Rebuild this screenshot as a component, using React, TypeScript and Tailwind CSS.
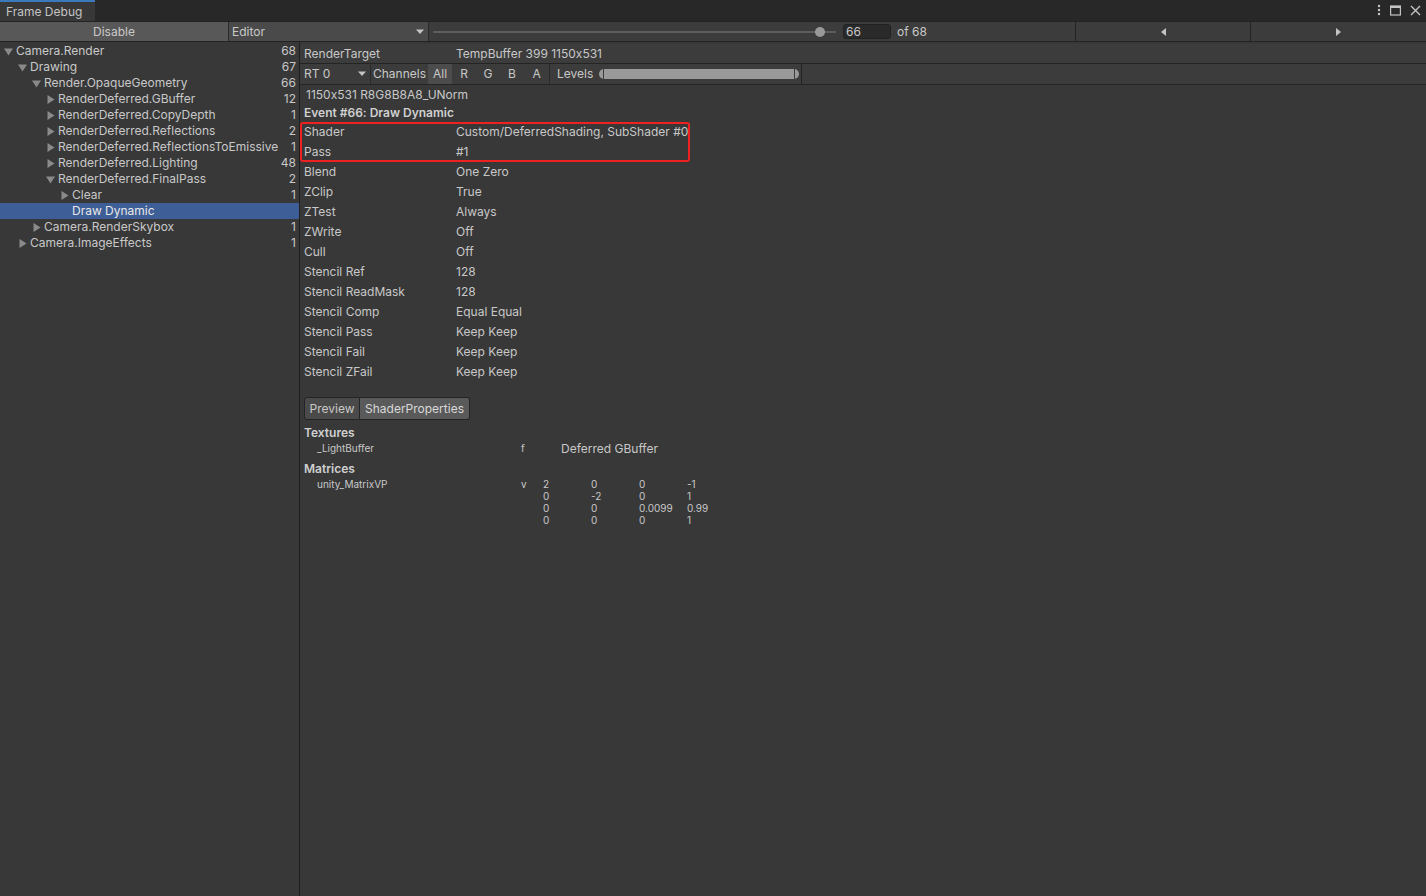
import React from "react";

const F = { fontFamily: "Inter, 'Noto Sans', sans-serif", fontFeatureSettings: "'calt' 0" };

type Node = { label: string; depth: number; count?: string; arrow?: "open" | "closed" | "none"; selected?: boolean };

const tree: Node[] = [
  { label: "Camera.Render", depth: 0, count: "68", arrow: "open" },
  { label: "Drawing", depth: 1, count: "67", arrow: "open" },
  { label: "Render.OpaqueGeometry", depth: 2, count: "66", arrow: "open" },
  { label: "RenderDeferred.GBuffer", depth: 3, count: "12", arrow: "closed" },
  { label: "RenderDeferred.CopyDepth", depth: 3, count: "1", arrow: "closed" },
  { label: "RenderDeferred.Reflections", depth: 3, count: "2", arrow: "closed" },
  { label: "RenderDeferred.ReflectionsToEmissive", depth: 3, count: "1", arrow: "closed" },
  { label: "RenderDeferred.Lighting", depth: 3, count: "48", arrow: "closed" },
  { label: "RenderDeferred.FinalPass", depth: 3, count: "2", arrow: "open" },
  { label: "Clear", depth: 4, count: "1", arrow: "closed" },
  { label: "Draw Dynamic", depth: 4, arrow: "none", selected: true },
  { label: "Camera.RenderSkybox", depth: 2, count: "1", arrow: "closed" },
  { label: "Camera.ImageEffects", depth: 1, count: "1", arrow: "closed" },
];

const props: [string, string][] = [
  ["Blend", "One Zero"],
  ["ZClip", "True"],
  ["ZTest", "Always"],
  ["ZWrite", "Off"],
  ["Cull", "Off"],
  ["Stencil Ref", "128"],
  ["Stencil ReadMask", "128"],
  ["Stencil Comp", "Equal Equal"],
  ["Stencil Pass", "Keep Keep"],
  ["Stencil Fail", "Keep Keep"],
  ["Stencil ZFail", "Keep Keep"],
];

function Arrow({ kind }: { kind: "open" | "closed" | "none" }) {
  if (kind === "none") return <span className="inline-block w-[12px]" />;
  return (
    <span className="inline-flex w-[12px] h-[16px] items-center justify-center">
      {kind === "open" ? (
        <svg width="9" height="9" viewBox="0 0 9 9"><path d="M0 1.5 H9 L4.5 8.5 Z" fill="#8a8a8a" /></svg>
      ) : (
        <svg width="9" height="9" viewBox="0 0 9 9"><path d="M1.5 0 V9 L8.5 4.5 Z" fill="#8a8a8a" /></svg>
      )}
    </span>
  );
}

const matrix = [
  ["2", "0", "0", "-1"],
  ["0", "-2", "0", "1"],
  ["0", "0", "0.0099", "0.99"],
  ["0", "0", "0", "1"],
];

export default function App() {
  return (
    <div style={F} className="w-[1426px] h-[896px] bg-[#383838] text-[#c8c8c8] flex flex-col overflow-hidden text-[12px]">
      {/* Tab bar */}
      <div className="h-[21px] bg-[#282828] flex items-end shrink-0 relative">
        <div className="h-[21px] w-[95px] bg-[#383838] border-t-2 border-[#3a79bb] flex items-center pl-[6px] text-[12px] text-[#c4c4c4]">
          Frame Debug
        </div>
        <div className="absolute right-[5px] top-[4px] flex items-center gap-[9px]">
          <svg width="4" height="12" viewBox="0 0 4 12"><circle cx="2" cy="2" r="1.2" fill="#c4c4c4"/><circle cx="2" cy="6" r="1.2" fill="#c4c4c4"/><circle cx="2" cy="10" r="1.2" fill="#c4c4c4"/></svg>
          <svg width="11" height="11" viewBox="0 0 11 11"><rect x="0.6" y="1" width="9.8" height="9" fill="none" stroke="#c4c4c4" strokeWidth="1.2"/><rect x="0.6" y="1" width="9.8" height="2" fill="#c4c4c4"/></svg>
          <svg width="11" height="11" viewBox="0 0 11 11"><path d="M1 1 L10 10 M10 1 L1 10" stroke="#c4c4c4" strokeWidth="1.4"/></svg>
        </div>
      </div>
      {/* Toolbar */}
      <div className="h-[21px] bg-[#3c3c3c] border-t border-b border-[#232323] flex shrink-0 items-stretch">
        <div className="w-[229px] bg-[#585858] border-r border-[#2a2a2a] flex items-center justify-center text-[#c8c8c8]">Disable</div>
        <div className="w-[200px] bg-[#4a4a4a] border-r border-[#2a2a2a] flex items-center justify-between pl-[3px] pr-[4px]">
          <span>Editor</span>
          <svg width="8" height="6" viewBox="0 0 8 6"><path d="M0 0.5 H8 L4 5 Z" fill="#c4c4c4" /></svg>
        </div>
        <div className="w-[414px] flex items-center pl-[4px] pr-[7px] relative">
          <div className="h-[2px] bg-[#5e5e5e] w-full rounded" />
          <div className="absolute left-[386px] top-[5px] w-[10px] h-[10px] rounded-full bg-[#999999]" />
        </div>
        <div className="flex items-center">
          <div className="w-[48px] h-[15px] bg-[#2a2a2a] border border-[#212121] rounded-[3px] flex items-center pl-[2px] text-[#c8c8c8]">66</div>
          <span className="ml-[6px]">of 68</span>
        </div>
        <div className="flex-1" />
        <div className="w-[175px] border-l border-[#232323] flex items-center justify-center">
          <svg width="5" height="8" viewBox="0 0 5 8"><path d="M5 0 V8 L0 4 Z" fill="#c4c4c4" /></svg>
        </div>
        <div className="w-[176px] border-l border-[#232323] flex items-center justify-center">
          <svg width="5" height="8" viewBox="0 0 5 8"><path d="M0 0 V8 L5 4 Z" fill="#c4c4c4" /></svg>
        </div>
      </div>
      {/* Body */}
      <div className="flex flex-1 min-h-0">
        {/* Left tree */}
        <div className="w-[300px] bg-[#383838] border-r border-[#1f1f1f] pt-[1px] shrink-0">
          {tree.map((n, i) => (
            <div key={i} className={`h-[16px] flex items-center ${n.selected ? "bg-[#3d5e96] text-[#e8e8e8]" : ""}`}>
              <div className="flex items-center flex-1" style={{ paddingLeft: 2 + n.depth * 14 }}>
                <Arrow kind={n.arrow || "none"} />
                <span className="ml-[2px]">{n.label}</span>
              </div>
              <span className="pr-[3px]">{n.count ?? ""}</span>
            </div>
          ))}
        </div>
        {/* Right panel */}
        <div className="flex-1 flex flex-col">
          <div className="h-[20px] bg-[#3c3c3c] flex items-center px-[4px] border-b border-[#242424] mt-[2px]">
            <span className="w-[152px]">RenderTarget</span>
            <span>TempBuffer 399 1150x531</span>
          </div>
          <div className="h-[21px] bg-[#3c3c3c] flex items-stretch border-b border-[#242424]">
            <div className="w-[71px] flex items-center justify-between pl-[4px] pr-[4px] border-r border-[#2a2a2a]">
              <span>RT 0</span>
              <svg width="8" height="6" viewBox="0 0 8 6"><path d="M0 0.5 H8 L4 5 Z" fill="#c4c4c4" /></svg>
            </div>
            <div className="flex items-center pl-[2px] pr-[2px]">Channels</div>
            <div className="w-[24px] bg-[#4c4c4c] flex items-center justify-center">All</div>
            <div className="w-[24px] flex items-center justify-center">R</div>
            <div className="w-[24px] flex items-center justify-center">G</div>
            <div className="w-[24px] flex items-center justify-center">B</div>
            <div className="w-[26px] flex items-center justify-center border-r border-[#2a2a2a]">A</div>
            <div className="w-[252px] flex items-center pl-[7px] border-r border-[#232323]">
              <span>Levels</span>
              <div className="ml-[6px] w-[200px] h-[10px] bg-[#9a9a9a] rounded-[5px] relative">
                <div className="absolute left-[4px] top-0 w-[1px] h-[10px] bg-[#3c3c3c]" />
                <div className="absolute right-[4px] top-0 w-[1px] h-[10px] bg-[#3c3c3c]" />
              </div>
            </div>
          </div>
          <div className="pl-[6px] h-[20px] flex items-center">1150x531 R8G8B8A8_UNorm</div>
          <div className="pl-[4px] h-[16px] flex items-center font-semibold text-[#d0d0d0]">Event #66: Draw Dynamic</div>
          <div className="relative mt-[1px]">
            <div className="absolute left-0 top-0 w-[390px] h-[40px] border-2 border-[#ef2020] rounded-[3px] pointer-events-none" />
            {[["Shader", "Custom/DeferredShading, SubShader #0"], ["Pass", "#1"]].map(([k, v]) => (
              <div key={k} className="h-[20px] flex items-center pl-[4px]">
                <span className="w-[152px]">{k}</span>
                <span>{v}</span>
              </div>
            ))}
            {props.map(([k, v]) => (
              <div key={k} className="h-[20px] flex items-center pl-[4px]">
                <span className="w-[152px]">{k}</span>
                <span>{v}</span>
              </div>
            ))}
          </div>
          <div className="flex ml-[4px] mt-[15px] h-[23px]">
            <div className="w-[56px] bg-[#4a4a4a] border border-[#242424] flex items-center justify-center rounded-l-[3px]">Preview</div>
            <div className="w-[110px] bg-[#5a5a5a] border border-l-0 border-[#242424] flex items-center justify-center rounded-r-[3px] text-[#d8d8d8]">ShaderProperties</div>
          </div>
          <div className="pl-[4px] mt-[5px] font-semibold h-[15px] flex items-center text-[#d0d0d0]">Textures</div>
          <div className="flex items-center h-[17px] text-[10px]">
            <span className="pl-[17px] w-[221px]">_LightBuffer</span>
            <span className="w-[40px]">f</span>
            <span className="text-[12px]">Deferred GBuffer</span>
          </div>
          <div className="pl-[4px] mt-[4px] font-semibold h-[15px] flex items-center text-[#d0d0d0]">Matrices</div>
          <div className="flex text-[10px] leading-[12px] mt-[2px]">
            <span className="pl-[17px] w-[221px]">unity_MatrixVP</span>
            <span className="w-[22px]">v</span>
            <div className="flex flex-col">
              {matrix.map((r, i) => (
                <div key={i} className="flex h-[12px]">
                  {r.map((c, j) => (
                    <span key={j} className="w-[48px]">{c}</span>
                  ))}
                </div>
              ))}
            </div>
          </div>
        </div>
      </div>
    </div>
  );
}
